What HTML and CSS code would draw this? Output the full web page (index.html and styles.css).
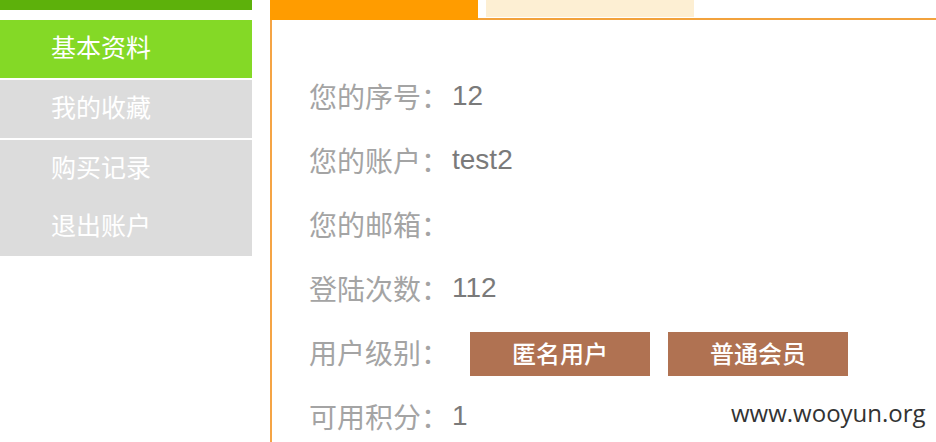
FILE: index.html
```html
<!DOCTYPE html>
<html lang="zh-CN">
<head>
<meta charset="utf-8">
<title>基本资料</title>
<link rel="stylesheet" href="styles.css">
</head>
<body>
<div class="page">
  <aside class="sidebar">
    <div class="topbar"></div>
    <ul class="menu">
      <li class="item active sep">基本资料</li>
      <li class="item sep">我的收藏</li>
      <li class="item">购买记录</li>
      <li class="item">退出账户</li>
    </ul>
  </aside>
  <main class="main">
    <div class="tabs">
      <div class="tab tab-on"></div>
      <div class="tab tab-off"></div>
    </div>
    <section class="panel">
      <div class="row"><span class="label">您的序号：</span><span class="value">12</span></div>
      <div class="row"><span class="label">您的账户：</span><span class="value">test2</span></div>
      <div class="row"><span class="label">您的邮箱：</span><span class="value"></span></div>
      <div class="row"><span class="label">登陆次数：</span><span class="value">112</span></div>
      <div class="row"><span class="label">用户级别：</span><span class="badges"><span class="badge">匿名用户</span><span class="badge">普通会员</span></span></div>
      <div class="row"><span class="label">可用积分：</span><span class="value">1</span></div>
    </section>
  </main>
</div>
<div class="watermark">www.wooyun.org</div>
</body>
</html>
```

FILE: styles.css
```css
html, body {
  margin: 0;
  padding: 0;
  background: #fff;
  overflow: hidden;
}
body {
  font-family: "Noto Sans CJK SC", "Liberation Sans", sans-serif;
  width: 936px;
  height: 442px;
  position: relative;
}
.page {
  display: flex;
  align-items: flex-start;
}
.sidebar {
  width: 252px;
  flex: none;
  margin-right: 18px;
}
.topbar {
  height: 10px;
  background: #5db10b;
}
.menu {
  list-style: none;
  margin: 10px 0 0 0;
  padding: 0;
}
.item {
  height: 58px;
  line-height: 52px;
  padding-left: 51px;
  font-size: 25px;
  color: #fff;
  background: #dcdcdc;
}
.item.sep {
  border-bottom: 2px solid #fff;
}
.item.active {
  background: #84d926;
}
.main {
  flex: 1;
  min-width: 0;
}
.tabs {
  display: flex;
  align-items: flex-start;
  gap: 8px;
  height: 18px;
}
.tab {
  width: 208px;
}
.tab-on {
  height: 20px;
  background: #ff9c00;
  position: relative;
  z-index: 1;
}
.tab-off {
  height: 17px;
  background: #fdefd3;
}
.panel {
  border-top: 2px solid #f2a23c;
  border-left: 2px solid #f5a445;
  padding: 44px 0 0 37px;
  height: 440px;
  box-sizing: border-box;
}
.row {
  display: flex;
  align-items: center;
  height: 64px;
}
.label {
  width: 143px;
  font-size: 28px;
  line-height: 60px;
  color: #a4a4a4;
  flex: none;
}
.value {
  font-family: "Liberation Sans", sans-serif;
  font-size: 28px;
  color: #7a7a7a;
}
.badges {
  display: flex;
  gap: 18px;
  margin-left: 18px;
  margin-top: 4px;
}
.badge {
  width: 180px;
  height: 44px;
  line-height: 42px;
  text-align: center;
  background: #b07252;
  color: #fff;
  font-size: 24px;
  font-weight: 500;
}
.watermark {
  position: absolute;
  left: 731px;
  top: 397px;
  font-family: "Open Sans", "DejaVu Sans", sans-serif;
  font-size: 24px;
  color: #333;
  line-height: 32px;
}
```
